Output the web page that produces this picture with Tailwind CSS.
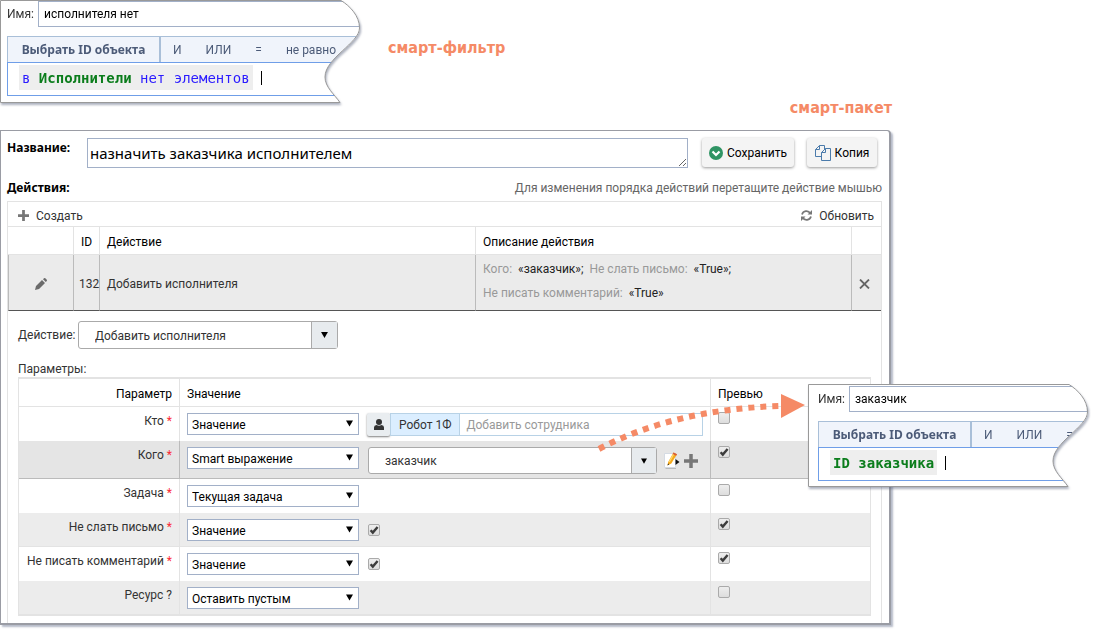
<!DOCTYPE html>
<html lang="ru">
<head>
<meta charset="utf-8">
<meta name="viewport" content="width=device-width, initial-scale=1">
<title>Смарт-пакет</title>
<script src="https://cdn.jsdelivr.net/npm/@tailwindcss/browser@4"></script>
</head>
<body class="relative min-h-screen bg-white font-['Roboto','Noto_Sans',sans-serif] text-xs leading-4 text-[#333]">

<svg class="hidden" aria-hidden="true">
  <symbol id="tick" viewBox="0 0 12 12"><path d="M2.6 6.2 4.8 8.6 9.6 3" fill="none" stroke="#3c3c3c" stroke-width="2.4"/></symbol>
  <symbol id="down" viewBox="0 0 8 7"><path d="M0 0h8L4 7z" fill="#000"/></symbol>
  <symbol id="plus" viewBox="0 0 12 12"><path d="M4.5 0h3v4.5H12v3H7.5V12h-3V7.5H0v-3h4.5z" fill="currentColor"/></symbol>
</svg>

<!-- Smart filter fragment -->
<header class="flex items-start">
  <section class="relative h-[104px] w-[360px] shrink-0 drop-shadow-[1px_2px_1px_rgba(90,100,125,0.5)]">
    <div class="h-full overflow-hidden bg-white pt-px pl-[7px] [clip-path:path('M0_0H341C350_6_360_16_360_28C360_43_325_58_325_77C325_87_334_94_340_103H0Z')]">
      <div class="flex items-center">
        <label for="name1" class="w-[31px] shrink-0">Имя:</label>
        <input id="name1" value="исполнителя нет" class="h-[26px] min-w-0 grow border border-[#a2b0c8] px-[5px] text-black">
      </div>
      <div class="mt-[9px] flex h-[26px] items-stretch border border-r-0 border-b-0 border-[#a9bfd8] bg-[#f0f4fb] text-[#4c5b78]">
        <button class="w-[153px] shrink-0 border-r-2 border-[#a9bfd8] font-['Noto_Sans',sans-serif] font-bold">Выбрать ID объекта</button>
        <button class="pl-3">И</button><button class="pl-6">ИЛИ</button><button class="pl-6">=</button><button class="pl-6 whitespace-nowrap">не равно</button>
      </div>
      <div class="flex h-[34px] items-center border border-[#6f9ee8] pb-[3px] pl-[11px] font-['DejaVu_Sans_Mono',monospace] text-sm text-[#2a1aff]">
        <span class="flex h-[25px] items-center bg-[#eee] px-[3px] whitespace-pre">в <b class="text-[#0b7d1c]">Исполнители</b> нет элементов</span>
        <span class="ml-2 h-[14px] w-px bg-black"></span>
      </div>
    </div>
    <svg class="absolute inset-0 overflow-visible" width="360" height="104" fill="none" stroke="#999" aria-hidden="true"><path d="M.5.5H341C350 6 359.500 16 359.500 28C359.500 43 325 58 325 77C325 87 334 94 340 102.500H.5Z"/></svg>
  </section>
  <h2 class="mt-[38px] ml-7 font-['DejaVu_Sans_Condensed','DejaVu_Sans',sans-serif] text-base leading-5 font-bold text-[#f58a66]">смарт-фильтр</h2>
</header>
<h2 class="mr-[202px] -mt-[6px] text-right font-['DejaVu_Sans_Condensed','DejaVu_Sans',sans-serif] text-base leading-5 font-bold text-[#f58a66]">смарт-пакет</h2>

<!-- Smart package editor -->
<main class="mt-3 mr-[203px] rounded-tr-sm border border-r-2 border-b-2 border-[#9a9ca4] bg-white pr-[7px] pl-[6px] shadow-[2px_2px_2px_rgba(120,130,155,0.55)]">
  <div class="flex items-start pt-[7px] pr-[5px]">
    <label for="title" class="w-[80px] shrink-0 pt-[2px] font-['Noto_Sans',sans-serif] font-bold text-black">Название:</label>
    <textarea id="title" rows="1" class="h-[30px] min-w-0 grow resize overflow-hidden border border-[#a2b0c8] px-[2px] py-[2px] font-['Noto_Sans',sans-serif] text-[15px] leading-6 text-black">назначить заказчика исполнителем</textarea>
    <button class="ml-[14px] flex h-[29px] w-[92px] shrink-0 items-center justify-center gap-1 rounded-[3px] bg-[#f4f4f4] text-black shadow-[0_1px_3px_rgba(0,0,0,0.4)]">
      <svg width="14" height="14" viewBox="0 0 14 14"><circle cx="7" cy="7" r="7" fill="#2f9464"/><path d="m3.500 5.500 3.500 3.500 3.500-3.500" fill="none" stroke="#fff" stroke-width="2.200"/></svg>Сохранить</button>
    <button class="ml-[13px] flex h-[29px] w-[70px] shrink-0 items-center justify-center gap-1 rounded-[3px] bg-[#f4f4f4] text-black shadow-[0_1px_3px_rgba(0,0,0,0.4)]">
      <svg width="16" height="16" viewBox="0 0 16 16" fill="#f4f4f4" stroke="#4b7bab"><path d="M4.500.5H9.500V11.500H.5V4.500zM4.500.5V4.500H.5"/><path d="M10.500 3.500H15.500V15.500H6.500V7.500zM10.500 3.500V7.500H6.500"/></svg>Копия</button>
  </div>
  <div class="mt-3 flex h-4 items-center justify-between">
    <h3 class="font-['Noto_Sans',sans-serif] font-bold text-black">Действия:</h3>
    <p class="text-[#666]">Для изменения порядка действий перетащите действие мышью</p>
  </div>

  <div class="mt-[5px] border border-b-0 border-[#e3e3e3] pb-[7px]">
    <div class="flex h-[25px] items-center justify-between border-b border-[#e3e3e3] px-[7px] pt-[3px] pl-[10px]">
      <button class="flex items-center gap-[7px]"><svg class="size-[11px] text-[#777]"><use href="#plus"/></svg>Создать</button>
      <button class="flex items-center gap-[7px]"><svg width="11" height="11" viewBox="0 0 11 11" fill="none" stroke="#777" stroke-width="1.700"><path d="M1 4.500A4.500 4.500 0 0 1 9.300 3.500M10 6.500A4.500 4.500 0 0 1 1.700 7.500"/><path d="M11 0v4.500H6.500zM0 11V6.500h4.500z" fill="#777" stroke="none"/></svg>Обновить</button>
    </div>

    <table class="w-full table-fixed border-separate border-spacing-0 text-left">
      <colgroup><col class="w-[65px]"><col class="w-[26px]"><col><col class="w-[376px]"><col class="w-[30px]"></colgroup>
      <thead class="text-black">
        <tr class="h-7 *:border-b *:border-l *:border-[#e3e3e3] *:p-0 *:pt-[2px] *:font-normal">
          <th class="border-l-0!"></th><th class="pl-[7px]!">ID</th><th class="pl-[7px]!">Действие</th><th class="pl-[7px]!">Описание действия</th><th></th>
        </tr>
      </thead>
      <tbody>
        <tr class="h-14 bg-[#ebebeb] *:border-b *:border-l *:border-b-[#555] *:border-l-[#bbb] *:p-0 *:pt-[2px]">
          <td><button aria-label="Изменить" class="mx-auto block"><svg width="12" height="12" viewBox="0 0 12 12" fill="#6b6b6b"><path d="m0 12 1-4 6-6 3 3-6 6zM8 1.200 9 .2q.7-.4 1.300 0L11.800 1.700q.4.600 0 1.300L10.800 4z"/></svg></button></td>
          <td class="pl-[5px]!">132</td>
          <td class="pl-[7px]!">Добавить исполнителя</td>
          <td class="pt-0! pb-1! pl-[7px]! leading-6 text-[#222]"><span class="text-[#999]">Кого:</span>&nbsp; «заказчик»;&nbsp; <span class="text-[#999]">Не слать письмо:</span>&nbsp; «True»;<br><span class="text-[#999]">Не писать комментарий:</span>&nbsp; «True»</td>
          <td><button aria-label="Удалить" class="mx-auto block pr-1"><svg width="11" height="10" viewBox="0 0 11 10"><path d="m1 .5 9 9M10 .5l-9 9" stroke="#666" stroke-width="1.800"/></svg></button></td>
        </tr>
      </tbody>
    </table>

    <div class="mt-[10px] flex h-7 items-center pl-[10px]">
      <label for="action" class="w-[60px] shrink-0">Действие:</label>
      <div class="relative h-7 w-[260px]">
        <select id="action" class="size-full appearance-none rounded-[3px] border border-[#aaa] bg-white pt-px pl-4"><option>Добавить исполнителя</option></select>
        <span class="pointer-events-none absolute inset-y-px right-px flex w-[26px] items-center justify-center border-l border-[#aaa] bg-[#e7ebee]"><svg class="h-[6px] w-[7px]"><use href="#down"/></svg></span>
      </div>
    </div>

    <h4 class="mt-3 h-4 pl-[10px]">Параметры:</h4>
    <div class="mr-[10px] ml-[10px]">
      <table class="w-full table-fixed border-separate border-spacing-0 border border-y-2 border-[#e3e3e3] text-left">
        <colgroup><col class="w-[160px]"><col><col class="w-[160px]"></colgroup>
        <thead class="text-black">
          <tr class="h-7 *:border-b *:border-[#e3e3e3] *:p-0 *:pt-[3px] *:font-normal">
            <th class="pr-[7px]! text-right">Параметр</th><th class="border-l pl-[7px]!">Значение</th><th class="border-l pl-[7px]!">Превью</th>
          </tr>
        </thead>
        <tbody class="align-top">
          <tr class="h-[34px] *:p-0">
            <td class="pt-[6px]! pr-[7px]! text-right"><label for="s1">Кто <span class="text-red-500">*</span></label></td>
            <td class="border-l border-[#e3e3e3] px-[7px]! pt-[6px]!">
              <div class="flex">
                <div class="relative h-[22px] w-[172px] shrink-0"><select id="s1" class="size-full appearance-none border border-[#a2b0c8] bg-white pt-[2px] pl-1 text-black"><option>Значение</option></select><svg class="pointer-events-none absolute top-[7px] right-[6px] h-[7px] w-[7px]"><use href="#down"/></svg></div>
                <button aria-label="Сотрудник" class="ml-2 flex h-[23px] w-[23px] shrink-0 items-center justify-center rounded-[2px] bg-[#e9edf0] shadow-[0_1px_2px_rgba(0,0,0,0.5)]"><svg width="10" height="11" viewBox="0 0 10 11" fill="#333"><circle cx="5" cy="3" r="3"/><path d="M0 11V8.500Q0 6.200 2.500 6q2.500 1.300 5 0Q10 6.200 10 8.500V11z"/></svg></button>
                <div class="flex h-[23px] min-w-0 grow border border-[#b8d2e6]">
                  <span class="flex shrink-0 items-center border-r border-[#b8d2e6] bg-[#dbeeff] px-2">Робот 1Ф</span>
                  <input aria-label="Добавить сотрудника" placeholder="Добавить сотрудника" class="min-w-0 grow pl-[6px] placeholder:text-[#999]">
                </div>
              </div>
            </td>
            <td class="border-l border-[#e3e3e3] pt-[5px]! pl-[7px]!"><input type="checkbox" aria-label="Превью: Кто" class="block size-3 appearance-none rounded-[2px] border border-[#aaa] bg-linear-to-b from-[#eee] to-[#ddd]"></td>
          </tr>
          <tr class="h-[38px] bg-[#e5e5e5] *:border-b *:border-b-[#bbb] *:p-0">
            <td class="pt-[6px]! pr-[7px]! text-right"><label for="s2">Кого <span class="text-red-500">*</span></label></td>
            <td class="border-l border-l-[#bbb] px-[7px]! pt-[6px]!">
              <div class="flex">
                <div class="relative h-[22px] w-[172px] shrink-0"><select id="s2" class="size-full appearance-none border border-[#a2b0c8] bg-white pt-[2px] pl-1 text-black"><option>Smart выражение</option></select><svg class="pointer-events-none absolute top-[7px] right-[6px] h-[7px] w-[7px]"><use href="#down"/></svg></div>
                <div class="relative ml-[9px] h-[27px] min-w-0 grow"><select aria-label="Выражение" class="size-full appearance-none rounded-[3px] border border-[#aaa] bg-white pt-px pl-4"><option>заказчик</option></select><span class="pointer-events-none absolute inset-y-px right-px flex w-[25px] items-center justify-center border-l border-[#aaa] bg-[#e7ebee]"><svg class="h-[6px] w-[6px]"><use href="#down"/></svg></span></div>
                <button aria-label="Редактировать" class="ml-[6px] self-center"><svg width="17" height="17" viewBox="0 0 17 17"><path d="M1.500 1.500H12.500V15.500H1.500z" fill="#fff" stroke="#d5dbe3"/><path d="M13 16.500H2.500" stroke="#bbb"/><path d="m4.500 13.500.7-3.500L10.500.5l3.500 1.700L8.300 11.500z" fill="#f5a91c"/><path d="m6.200 10 5-8.800" stroke="#ffd96b" stroke-width="1.300"/><path d="m10.500.5 3.500 1.700-.8 1.500L9.700 2z" fill="#d85a3a"/><path d="m4.500 13.500.5-2 1.200.7z" fill="#222"/><path d="M12.500 7 16.500 10 12.500 13z" fill="#111"/></svg></button>
                <button aria-label="Добавить" class="mr-[5px] ml-1 self-center text-[#777]"><svg class="size-[14px]"><use href="#plus"/></svg></button>
              </div>
            </td>
            <td class="border-l border-l-[#bbb] pt-[5px]! pl-[7px]!"><span class="grid size-3 *:col-start-1 *:row-start-1"><input type="checkbox" checked aria-label="Превью: Кого" class="peer size-3 appearance-none rounded-[2px] border border-[#aaa] bg-linear-to-b from-[#eee] to-[#ddd]"><svg class="pointer-events-none invisible size-3 peer-checked:visible"><use href="#tick"/></svg></span></td>
          </tr>
          <tr class="h-[34px] *:p-0">
            <td class="pt-[6px]! pr-[7px]! text-right"><label for="s3">Задача <span class="text-red-500">*</span></label></td>
            <td class="border-l border-[#e3e3e3] px-[7px]! pt-[6px]!"><div class="relative h-[22px] w-[172px]"><select id="s3" class="size-full appearance-none border border-[#a2b0c8] bg-white pt-[2px] pl-1 text-black"><option>Текущая задача</option></select><svg class="pointer-events-none absolute top-[7px] right-[6px] h-[7px] w-[7px]"><use href="#down"/></svg></div></td>
            <td class="border-l border-[#e3e3e3] pt-[5px]! pl-[7px]!"><input type="checkbox" aria-label="Превью: Задача" class="block size-3 appearance-none rounded-[2px] border border-[#aaa] bg-linear-to-b from-[#eee] to-[#ddd]"></td>
          </tr>
          <tr class="h-[34px] bg-[#ececec] *:border-b *:border-[#e3e3e3] *:p-0">
            <td class="pt-[6px]! pr-[7px]! text-right"><label for="s4">Не слать письмо <span class="text-red-500">*</span></label></td>
            <td class="border-l px-[7px]! pt-[6px]!"><div class="flex items-center gap-[9px]"><div class="relative h-[22px] w-[172px]"><select id="s4" class="size-full appearance-none border border-[#a2b0c8] bg-white pt-[2px] pl-1 text-black"><option>Значение</option></select><svg class="pointer-events-none absolute top-[7px] right-[6px] h-[7px] w-[7px]"><use href="#down"/></svg></div><span class="grid size-3 *:col-start-1 *:row-start-1"><input type="checkbox" checked aria-label="Не слать письмо" class="peer size-3 appearance-none rounded-[2px] border border-[#aaa] bg-linear-to-b from-[#eee] to-[#ddd]"><svg class="pointer-events-none invisible size-3 peer-checked:visible"><use href="#tick"/></svg></span></div></td>
            <td class="border-l pt-[5px]! pl-[7px]!"><span class="grid size-3 *:col-start-1 *:row-start-1"><input type="checkbox" checked aria-label="Превью: Не слать письмо" class="peer size-3 appearance-none rounded-[2px] border border-[#aaa] bg-linear-to-b from-[#eee] to-[#ddd]"><svg class="pointer-events-none invisible size-3 peer-checked:visible"><use href="#tick"/></svg></span></td>
          </tr>
          <tr class="h-[34px] *:p-0">
            <td class="pt-[6px]! pr-[7px]! text-right whitespace-nowrap"><label for="s5">Не писать комментарий <span class="text-red-500">*</span></label></td>
            <td class="border-l border-[#e3e3e3] px-[7px]! pt-[6px]!"><div class="flex items-center gap-[9px]"><div class="relative h-[22px] w-[172px]"><select id="s5" class="size-full appearance-none border border-[#a2b0c8] bg-white pt-[2px] pl-1 text-black"><option>Значение</option></select><svg class="pointer-events-none absolute top-[7px] right-[6px] h-[7px] w-[7px]"><use href="#down"/></svg></div><span class="grid size-3 *:col-start-1 *:row-start-1"><input type="checkbox" checked aria-label="Не писать комментарий" class="peer size-3 appearance-none rounded-[2px] border border-[#aaa] bg-linear-to-b from-[#eee] to-[#ddd]"><svg class="pointer-events-none invisible size-3 peer-checked:visible"><use href="#tick"/></svg></span></div></td>
            <td class="border-l border-[#e3e3e3] pt-[5px]! pl-[7px]!"><span class="grid size-3 *:col-start-1 *:row-start-1"><input type="checkbox" checked aria-label="Превью: Не писать комментарий" class="peer size-3 appearance-none rounded-[2px] border border-[#aaa] bg-linear-to-b from-[#eee] to-[#ddd]"><svg class="pointer-events-none invisible size-3 peer-checked:visible"><use href="#tick"/></svg></span></td>
          </tr>
          <tr class="h-[33px] bg-[#ececec] *:p-0">
            <td class="pt-[6px]! pr-[7px]! text-right"><label for="s6">Ресурс ?</label></td>
            <td class="border-l border-[#e3e3e3] px-[7px]! pt-[6px]!"><div class="relative h-[22px] w-[172px]"><select id="s6" class="size-full appearance-none border border-[#a2b0c8] bg-white pt-[2px] pl-1 text-black"><option>Оставить пустым</option></select><svg class="pointer-events-none absolute top-[7px] right-[6px] h-[7px] w-[7px]"><use href="#down"/></svg></div></td>
            <td class="border-l border-[#e3e3e3] pt-[5px]! pl-[7px]!"><input type="checkbox" aria-label="Превью: Ресурс" class="block size-3 appearance-none rounded-[2px] border border-[#aaa] bg-linear-to-b from-[#eee] to-[#ddd]"></td>
          </tr>
        </tbody>
      </table>
    </div>
  </div>
</main>

<!-- Dotted arrow from the parameter to its expression -->
<svg class="pointer-events-none absolute top-[390px] right-[288px]" width="210" height="66" viewBox="596 390 210 66" fill="none" aria-hidden="true">
  <path d="M599 449Q675 409 781 406" stroke="#f58a66" stroke-width="6" stroke-dasharray="6 6"/>
  <path d="M781 394 805 405 781 418z" fill="#f58a66"/>
</svg>

<!-- Smart expression fragment -->
<section class="absolute top-[384px] right-[6px] h-[104px] w-[280px] drop-shadow-[1px_2px_1px_rgba(90,100,125,0.5)]">
  <div class="h-full overflow-hidden bg-white pt-[2px] pl-[10px] [clip-path:path('M0_0H261C270_6_280_16_280_28C280_43_245_58_245_77C245_87_254_94_260_103H0Z')]">
    <div class="flex items-center">
      <label for="name2" class="w-[31px] shrink-0">Имя:</label>
      <input id="name2" value="заказчик" class="h-[26px] min-w-0 grow border border-[#a2b0c8] px-[5px] text-black">
    </div>
    <div class="mt-[9px] flex h-[26px] items-stretch border border-r-0 border-b-0 border-[#a9bfd8] bg-[#f0f4fb] text-[#4c5b78]">
      <button class="w-[153px] shrink-0 border-r-2 border-[#a9bfd8] font-['Noto_Sans',sans-serif] font-bold">Выбрать ID объекта</button>
      <button class="pl-3">И</button><button class="pl-6">ИЛИ</button><button class="pl-6">=</button>
    </div>
    <div class="flex h-[34px] items-center border border-[#6f9ee8] pb-[3px] pl-[11px] font-['DejaVu_Sans_Mono',monospace] text-sm">
      <span class="flex h-[25px] items-center bg-[#eee] px-[3px] whitespace-pre"><b class="text-[#0b7d1c]">ID заказчика</b></span>
      <span class="ml-2 h-[14px] w-px bg-black"></span>
    </div>
  </div>
  <svg class="absolute inset-0 overflow-visible" width="280" height="104" fill="none" stroke="#999" aria-hidden="true"><path d="M.5.5H261C270 6 279.500 16 279.500 28C279.500 43 245 58 245 77C245 87 254 94 260 102.500H.5Z"/></svg>
</section>

</body>
</html>
